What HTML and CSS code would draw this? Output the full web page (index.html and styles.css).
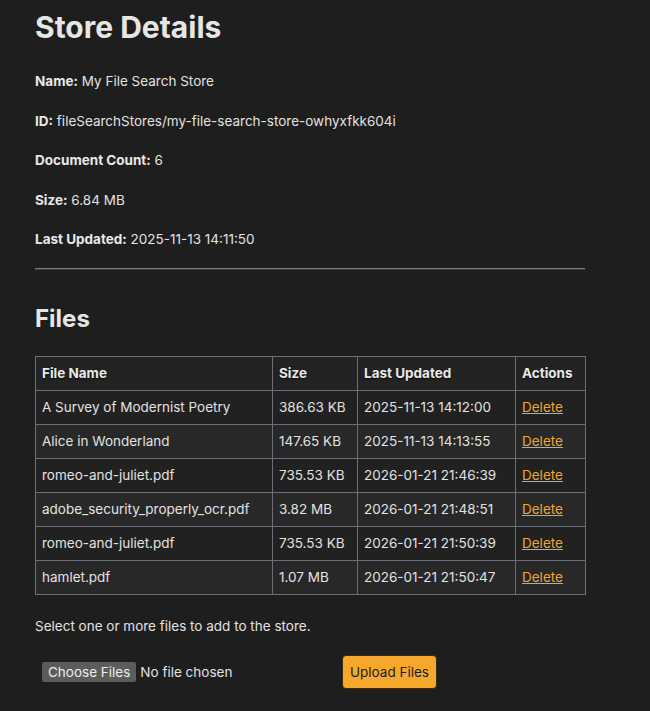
FILE: index.html
```html
<!DOCTYPE html>
<html>
<head>
    <title>Store Details</title>
    <meta charset="UTF-8">
    <link rel="stylesheet" href="styles.css">
</head>
<body>
<div class="page">
    <h1>Store Details</h1>
    <p><strong>Name:</strong> My File Search Store</p>
    <p><strong>ID:</strong> fileSearchStores/my-file-search-store-owhyxfkk604i</p>
    <p><strong>Document Count:</strong> 6</p>
    <p><strong>Size:</strong> 6.84 MB</p>
    <p><strong>Last Updated:</strong> 2025-11-13 14:11:50</p>

    <hr>

    <h2>Files</h2>
    <table class="files-table">
        <thead>
            <tr>
                <th class="col-name">File Name</th>
                <th class="col-size">Size</th>
                <th class="col-date">Last Updated</th>
                <th class="col-actions">Actions</th>
            </tr>
        </thead>
        <tbody>
            <tr>
                <td>A Survey of Modernist Poetry</td>
                <td>386.63 KB</td>
                <td>2025-11-13 14:12:00</td>
                <td><a href="#" class="delete-link">Delete</a></td>
            </tr>
            <tr>
                <td>Alice in Wonderland</td>
                <td>147.65 KB</td>
                <td>2025-11-13 14:13:55</td>
                <td><a href="#" class="delete-link">Delete</a></td>
            </tr>
            <tr>
                <td>romeo-and-juliet.pdf</td>
                <td>735.53 KB</td>
                <td>2026-01-21 21:46:39</td>
                <td><a href="#" class="delete-link">Delete</a></td>
            </tr>
            <tr>
                <td>adobe_security_properly_ocr.pdf</td>
                <td>3.82 MB</td>
                <td>2026-01-21 21:48:51</td>
                <td><a href="#" class="delete-link">Delete</a></td>
            </tr>
            <tr>
                <td>romeo-and-juliet.pdf</td>
                <td>735.53 KB</td>
                <td>2026-01-21 21:50:39</td>
                <td><a href="#" class="delete-link">Delete</a></td>
            </tr>
            <tr>
                <td>hamlet.pdf</td>
                <td>1.07 MB</td>
                <td>2026-01-21 21:50:47</td>
                <td><a href="#" class="delete-link">Delete</a></td>
            </tr>
        </tbody>
    </table>

    <form class="upload-form" onsubmit="return false;">
        <p class="upload-hint">Select one or more files to add to the store.</p>
        <div class="upload-row">
            <input type="file" multiple class="file-input">
            <button type="submit" class="upload-button">Upload Files</button>
        </div>
    </form>
</div>
</body>
</html>
```

FILE: styles.css
```css
body {
    font-family: Inter, 'Noto Sans', sans-serif;
    background: #1e1e1e;
    color: #e2e2e2;
    margin: 0;
    padding: 0;
}

.page {
    width: 550px;
    padding: 0 35px;
}

h1 {
    font-size: 30px;
    font-weight: bold;
    color: #e6e6e6;
    margin: 8px 0 24px 0;
    line-height: 38px;
}

h2 {
    font-size: 24px;
    font-weight: bold;
    color: #e6e6e6;
    margin: 34px 0 22px 0;
    line-height: 30px;
}

p {
    font-size: 13.5px;
    line-height: 22px;
    margin: 17.5px 0;
}

strong {
    font-weight: bold;
    color: #e8e8e8;
}

hr {
    border: none;
    border-top: 1px solid #808080;
    border-bottom: 1px solid #3a3a3a;
    margin: 17px 0 0 0;
}

.files-table {
    width: 551px;
    border-collapse: collapse;
    border: 1px solid #6e6e78;
    font-size: 13.5px;
}

.files-table th,
.files-table td {
    border: 1px solid #6e6e78;
    padding: 0 6px;
    height: 33px;
    text-align: left;
}

.files-table th {
    font-weight: bold;
    background: #232323;
    color: #e8e8e8;
    text-shadow: 0 1px 2px rgba(0, 0, 0, 0.8);
}

.files-table tbody tr:nth-child(odd) td {
    background: #212121;
}

.files-table tbody tr:nth-child(even) td {
    background: #282828;
}

.col-name { width: 224px; }
.col-size { width: 72px; }
.col-date { width: 145px; }

.delete-link {
    color: #f0a62e;
    text-decoration: underline;
}

.upload-hint {
    margin: 20px 0 0 0;
}

.upload-row {
    display: flex;
    align-items: center;
    margin-top: 18px;
    padding-left: 7px;
}

.file-input {
    width: 300px;
    font-family: Inter, 'Noto Sans', sans-serif;
    font-size: 13.5px;
    color: #e2e2e2;
}

.file-input::file-selector-button {
    font-family: Inter, 'Noto Sans', sans-serif;
    font-size: 13.5px;
    background: #5c5c5c;
    color: #ececec;
    border: none;
    border-radius: 2px;
    padding: 2px 6px;
    margin-right: 4px;
}

.upload-button {
    font-family: Inter, 'Noto Sans', sans-serif;
    font-size: 13.5px;
    background: #f5a82c;
    color: #222;
    border: 1px solid #3a2a10;
    border-radius: 4px;
    padding: 8px 7px;
    cursor: pointer;
}
```
